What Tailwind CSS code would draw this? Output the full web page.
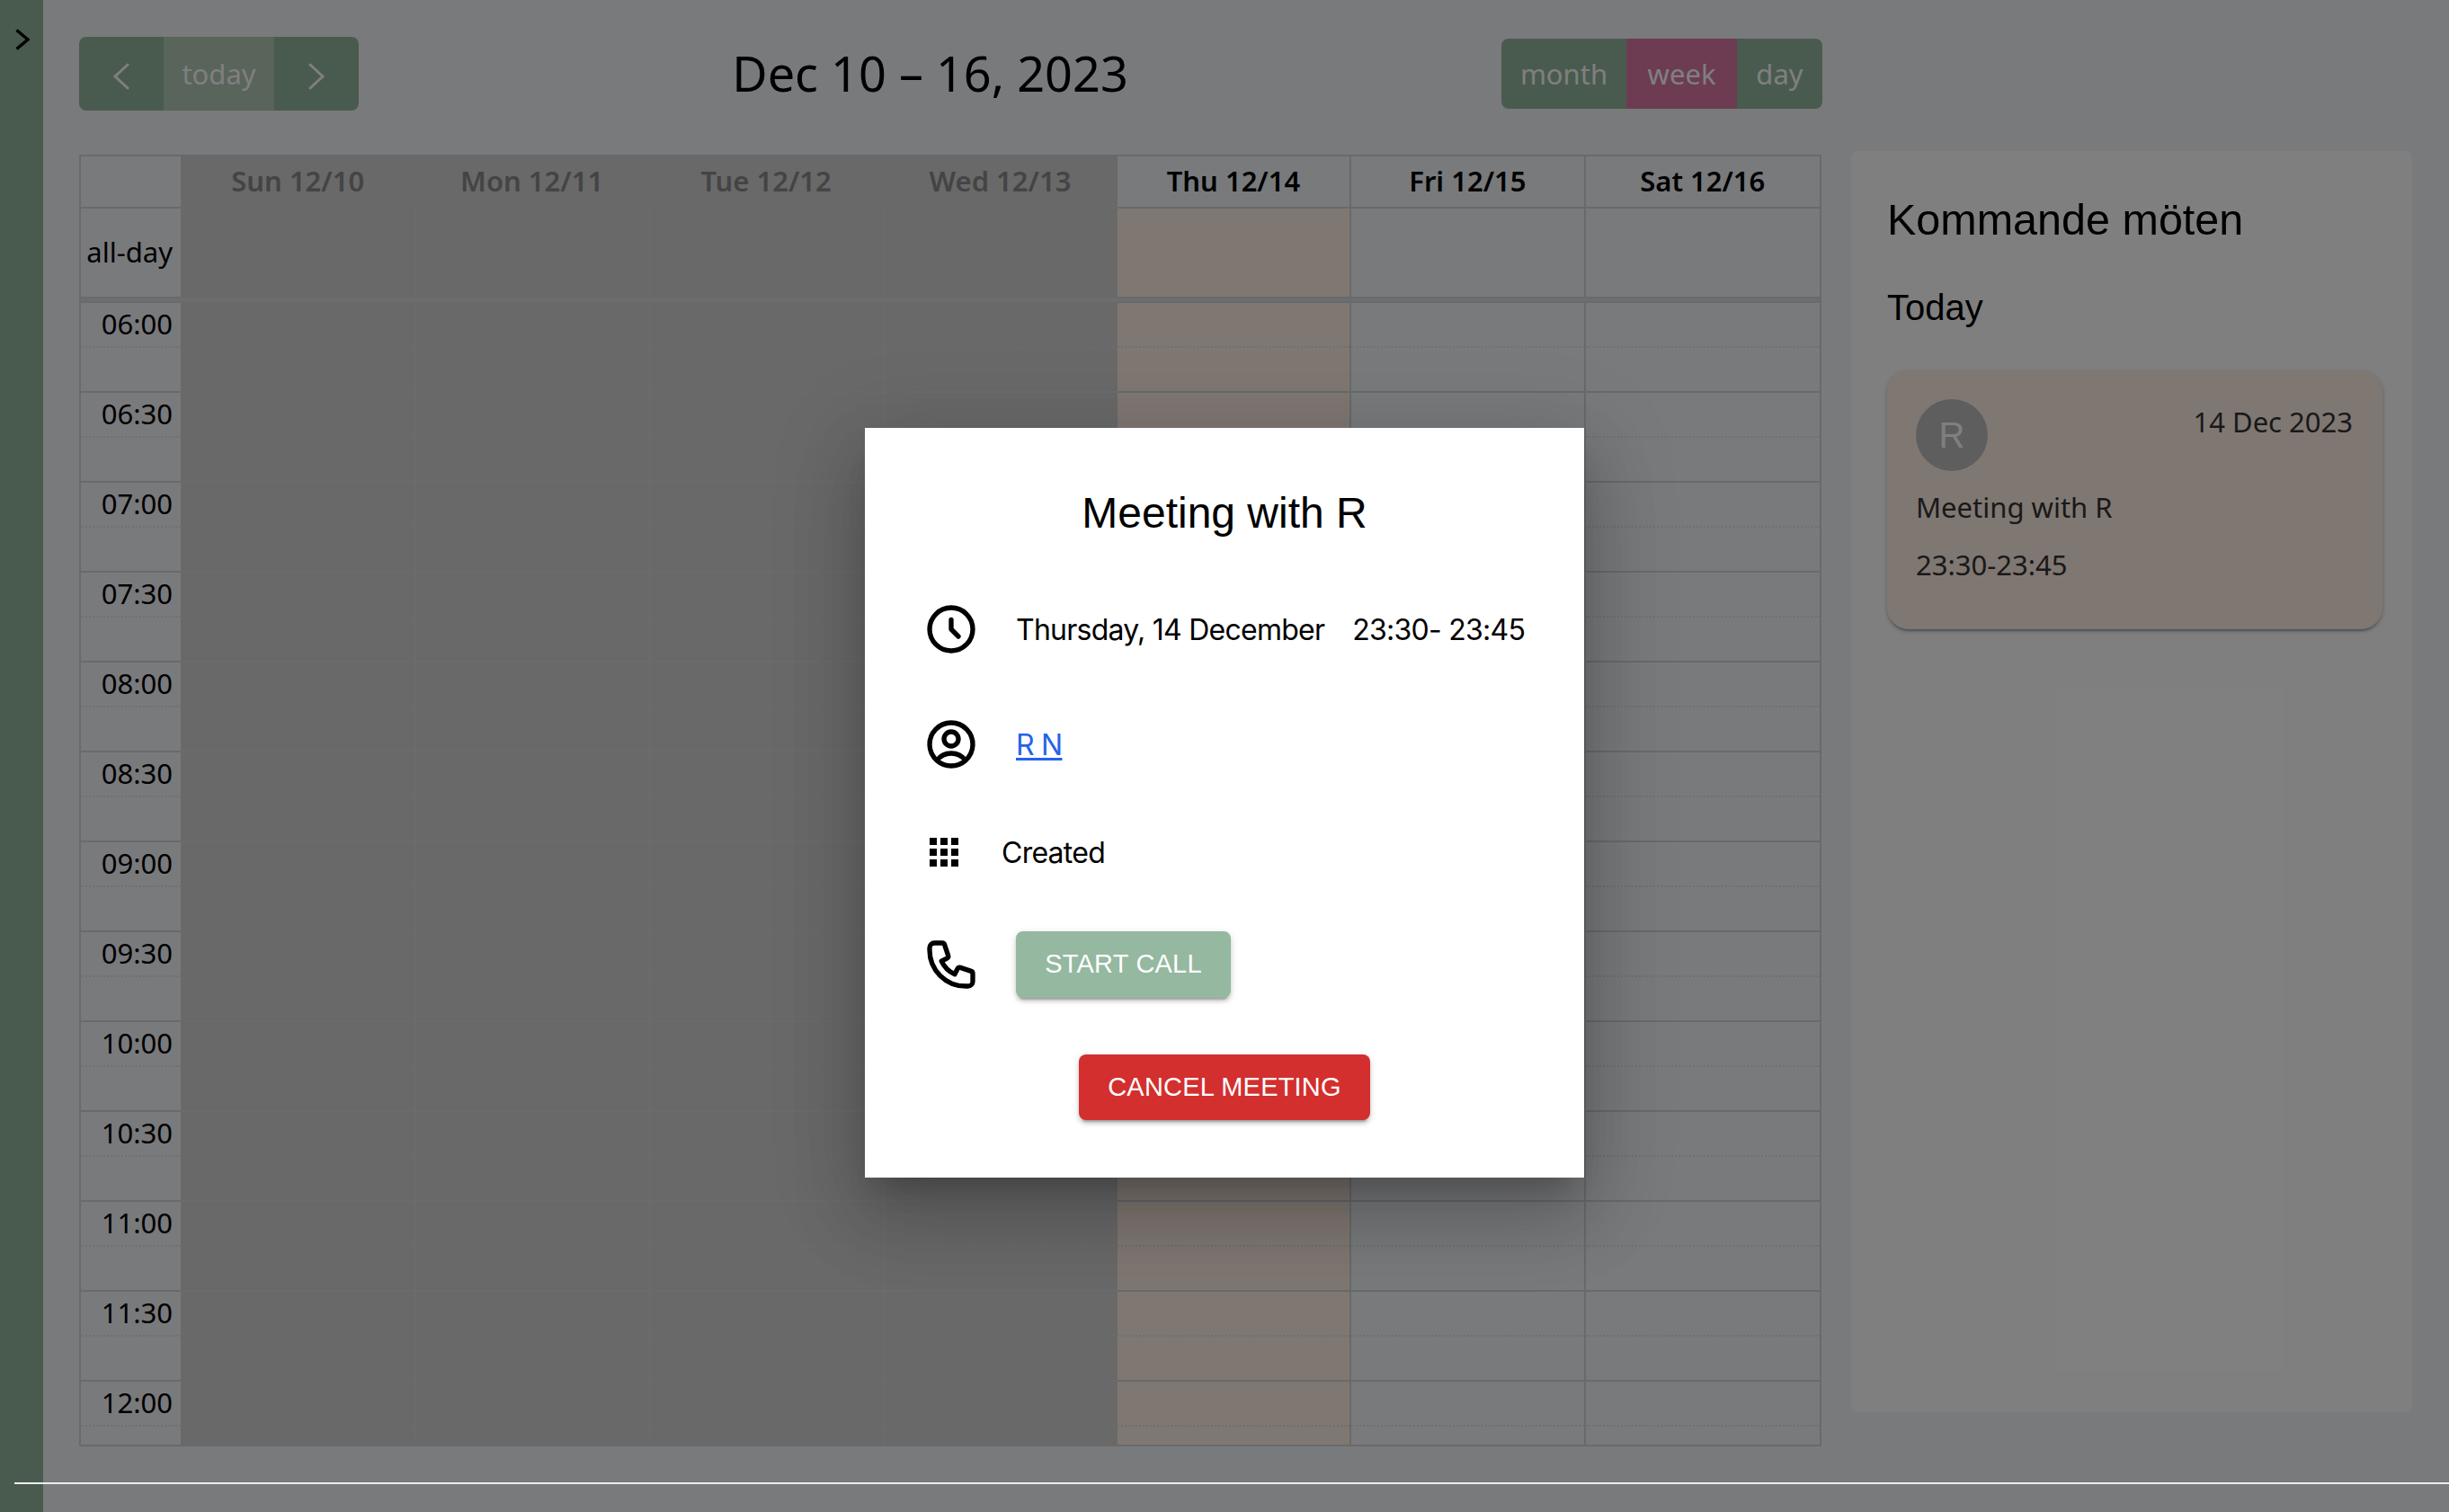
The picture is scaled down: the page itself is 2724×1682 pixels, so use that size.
<!DOCTYPE html>
<html lang="sv">
<head>
    <meta charset="UTF-8">
    <meta name="viewport" content="width=device-width, initial-scale=1.0">
    <title>Kalender</title>
    <script src="https://cdn.jsdelivr.net/npm/@tailwindcss/browser@4"></script>
</head>
<body class="font-['Noto_Sans',sans-serif]">
<div class="relative flex h-screen w-full overflow-hidden bg-[#f2f4f8]">

    <!-- sidebar -->
    <aside class="w-[48px] shrink-0 bg-[#92b69c] pt-[32px] pl-[17px]">
        <svg class="w-[16px] h-[24px]" viewBox="0 0 16 24" fill="none" stroke="#000" stroke-width="3.5"><path d="M1.5 1.5 14 12 1.5 22.5"/></svg>
    </aside>

    <!-- calendar -->
    <main class="ml-[40px] w-[1938px] shrink-0">
        <div class="mt-[41px] mb-[49px] h-[82px] flex items-center justify-between">
            <div class="flex h-[82px] w-[311px] rounded-lg overflow-hidden text-white text-[31px]">
                <div class="w-[94px] bg-[#92b69c] flex items-center justify-center pt-[6px]">
                    <svg class="w-[20px] h-[30px]" viewBox="0 0 20 30" fill="none" stroke="#fff" stroke-width="3" stroke-linecap="round"><path d="M17 2 3 15l14 13"/></svg>
                </div>
                <div class="w-[123px] bg-[#b2c8b6] flex items-center justify-center">today</div>
                <div class="w-[94px] bg-[#92b69c] flex items-center justify-center pt-[6px]">
                    <svg class="w-[20px] h-[30px]" viewBox="0 0 20 30" fill="none" stroke="#fff" stroke-width="3" stroke-linecap="round"><path d="m3 2 14 13L3 28"/></svg>
                </div>
            </div>
            <h2 class="text-[54px] leading-[82px] pb-[3px] text-black">Dec 10 – 16, 2023</h2>
            <div class="flex h-[78px] w-[357px] -mr-px rounded-lg overflow-hidden text-white text-[31px]">
                <div class="w-[139px] bg-[#92b69c] flex items-center justify-center">month</div>
                <div class="w-[123px] bg-[#da78a4] flex items-center justify-center">week</div>
                <div class="w-[95px] bg-[#92b69c] flex items-center justify-center">day</div>
            </div>
        </div>

        <div id="grid" class="w-[1938px] border-2 border-[#d0d4d6] text-[31px] text-black"></div>
    </main>

    <!-- upcoming meetings -->
    <section class="ml-[33px] mt-[168px] w-[624px] h-[1403px] rounded-lg bg-white pl-[40px] font-['Liberation_Sans',sans-serif] text-black">
        <h2 class="pt-[44px] text-[48.5px] leading-[64px]">Kommande möten</h2>
        <h3 class="mt-[38px] text-[40px] leading-[56px]">Today</h3>
        <div class="mt-[42px] w-[551px] h-[288px] rounded-[24px] bg-[#ffeee5] px-[32px] pt-[32px] text-[#333] shadow-[0_4px_2px_-2px_rgba(0,0,0,0.2),0_2px_4px_rgba(0,0,0,0.14),0_2px_6px_rgba(0,0,0,0.12)] font-['Noto_Sans',sans-serif] text-[31px]">
            <div class="flex justify-between">
                <div class="w-[80px] h-[80px] rounded-full bg-[#bdbdbd] text-white flex items-center justify-center text-[40px] font-['Liberation_Sans',sans-serif]">R</div>
                <div class="pr-[1px] leading-[50px]">14 Dec 2023</div>
            </div>
            <p class="mt-[8px] leading-[64px]">Meeting with R</p>
            <p class="leading-[64px]">23:30-23:45</p>
        </div>
    </section>

    <!-- backdrop -->
    <div class="absolute inset-0 z-10 bg-black/50"></div>
    <div class="absolute left-4 right-0 top-[1649px] h-0.5 z-20 bg-[#eeeeee]"></div>

    <!-- meeting dialog -->
    <div class="absolute z-30 left-[962px] top-[476px] w-[800px] h-[834px] bg-white pl-[64px] pt-[63px] text-black font-['Inter',sans-serif] text-[32px] tracking-[-0.75px] shadow-[0_22px_30px_-14px_rgba(0,0,0,0.2),0_48px_76px_6px_rgba(0,0,0,0.14),0_18px_92px_16px_rgba(0,0,0,0.12)]">
        <h2 class="-ml-[64px] mb-[65px] text-center text-[48px] leading-[64px] tracking-normal font-['Liberation_Sans',sans-serif]">Meeting with R</h2>
        <div class="flex flex-col gap-[64px]">
            <div class="flex items-center gap-[40px] h-[64px]">
                <svg class="w-16 h-16 shrink-0" viewBox="0 0 24 24" fill="none" stroke="currentColor" stroke-width="2" stroke-linecap="round" stroke-linejoin="round"><path d="M12 8v4l3 3m6-3a9 9 0 11-18 0 9 9 0 0118 0z"/></svg>
                <div class="flex gap-[31px] pt-[2px]"><span>Thursday, 14 December</span><span>23:30- 23:45</span></div>
            </div>
            <div class="flex items-center gap-[40px] h-[64px]">
                <svg class="w-16 h-16 shrink-0" viewBox="0 0 24 24" fill="none" stroke="currentColor" stroke-width="2" stroke-linecap="round" stroke-linejoin="round"><path d="M17.982 18.725A7.488 7.488 0 0012 15.75a7.488 7.488 0 00-5.982 2.975m11.964 0a9 9 0 10-11.963 0m11.963 0A8.966 8.966 0 0112 21a8.966 8.966 0 01-5.982-2.275M15 9.75a3 3 0 11-6 0 3 3 0 016 0z"/></svg>
                <a href="#" class="pt-[2px] text-[#2563eb] underline decoration-[3px] underline-offset-[3px]">R N</a>
            </div>
            <div class="flex items-center gap-[40px] h-[48px]">
                <svg class="w-12 h-12 shrink-0" viewBox="0 0 24 24" fill="currentColor"><path d="M4 8h4V4H4v4zm6 12h4v-4h-4v4zm-6 0h4v-4H4v4zm0-6h4v-4H4v4zm6 0h4v-4h-4v4zm6-10v4h4V4h-4zm-6 4h4V4h-4v4zm6 6h4v-4h-4v4zm0 6h4v-4h-4v4z"/></svg>
                <span class="pt-[2px]">Created</span>
            </div>
            <div class="flex items-center gap-[40px] h-[74px]">
                <svg class="w-16 h-16 shrink-0" viewBox="0 0 24 24" fill="none" stroke="currentColor" stroke-width="2" stroke-linecap="round" stroke-linejoin="round"><path d="M3 5a2 2 0 012-2h3.28a1 1 0 01.948.684l1.498 4.493a1 1 0 01-.502 1.21l-2.257 1.13a11.042 11.042 0 005.516 5.516l1.13-2.257a1 1 0 011.21-.502l4.493 1.498a1 1 0 01.684.949V19a2 2 0 01-2 2h-1C9.716 21 3 14.284 3 6V5z"/></svg>
                <button class="w-[239px] h-[74px] rounded-lg bg-[#94b8a0] text-white text-[29px] tracking-[0.2px] font-['Liberation_Sans',sans-serif] shadow-[0_6px_2px_-4px_rgba(0,0,0,0.2),0_4px_4px_rgba(0,0,0,0.14),0_2px_10px_rgba(0,0,0,0.12)]">START CALL</button>
            </div>
            <div class="-ml-[64px] -mt-[1px] flex justify-center">
                <button class="w-[324px] h-[73px] rounded-lg bg-[#d32f2f] text-white text-[29px] tracking-[0.2px] font-['Liberation_Sans',sans-serif] shadow-[0_6px_2px_-4px_rgba(0,0,0,0.2),0_4px_4px_rgba(0,0,0,0.14),0_2px_10px_rgba(0,0,0,0.12)]">CANCEL MEETING</button>
            </div>
        </div>
    </div>
</div>

<script>
    const days = ['Sun 12/10', 'Mon 12/11', 'Tue 12/12', 'Wed 12/13', 'Thu 12/14', 'Fri 12/15', 'Sat 12/16'];
    const times = ['06:00', '06:30', '07:00', '07:30', '08:00', '08:30', '09:00', '09:30', '10:00', '10:30', '11:00', '11:30', '12:00'];
    const rowClass = 'grid grid-cols-[111px_repeat(7,1fr)]';

    // past days are greyed out, Thursday is today
    function cellClass(i) {
        if (i < 4) return 'bg-[#d2d2d2] border-[#d6d6d6]' + (i > 0 ? ' border-l-2' : '');
        if (i === 4) return 'bg-[#ffeee5] border-r-2 border-[#d0d4d6]';
        if (i === 5) return 'border-r-2 border-[#d0d4d6]';
        return 'border-[#d0d4d6]';
    }

    let html = `<div class="${rowClass} h-[58px] border-b-2 border-[#d0d4d6]"><div></div>`;
    days.forEach((d, i) => {
        const tone = i < 4 ? 'bg-[#d2d2d2] text-[#888888]' : (i < 6 ? 'border-r-2 border-[#d0d4d6]' : '');
        html += `<div class="${tone} text-center font-semibold leading-[54px]">${d}</div>`;
    });
    html += `</div><div class="${rowClass} h-[100px] border-b-2 border-[#d0d4d6]"><div class="text-right pr-[9px] leading-[96px]">all-day</div>`;
    days.forEach((d, i) => { html += `<div class="${cellClass(i)}"></div>`; });
    html += `</div><div class="h-[3px] bg-[#d9dcde]"></div>`;

    times.forEach((t, r) => {
        const height = r === times.length - 1 ? 'h-[72px]' : 'h-[100px]';
        const dots = 'h-[50px] border-b-2 border-dotted';
        html += `<div class="${rowClass} ${height}">`;
        html += `<div class="border-t-2 border-[#d0d4d6]"><div class="${dots} border-[#dde0e2] text-right pr-[9px] leading-[46px]">${t}</div></div>`;
        days.forEach((d, i) => {
            html += `<div class="${cellClass(i)} border-t-2"><div class="${dots} ${i < 4 ? 'border-[#d6d6d6]' : 'border-[#dde0e2]'}"></div></div>`;
        });
        html += `</div>`;
    });
    document.getElementById('grid').innerHTML = html;
</script>
</body>
</html>
